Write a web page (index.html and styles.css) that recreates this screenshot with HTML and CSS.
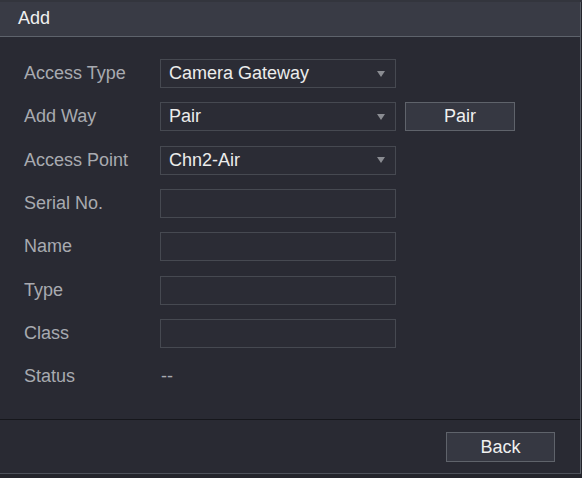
FILE: index.html
```html
<!DOCTYPE html>
<html>
<head>
<meta charset="utf-8">
<link rel="stylesheet" href="styles.css">
</head>
<body>
<div class="backdrop"></div>
<div class="dialog">
  <div class="header">Add</div>
  <div class="content">
    <div class="form">
      <div class="label">Access Type</div>
      <div class="row"><div class="select"><span>Camera Gateway</span><i class="arrow"></i></div></div>
      <div class="label">Add Way</div>
      <div class="row"><div class="select"><span>Pair</span><i class="arrow"></i></div><button class="btn pair">Pair</button></div>
      <div class="label">Access Point</div>
      <div class="row"><div class="select"><span>Chn2-Air</span><i class="arrow"></i></div></div>
      <div class="label">Serial No.</div>
      <div class="row"><div class="input"></div></div>
      <div class="label">Name</div>
      <div class="row"><div class="input"></div></div>
      <div class="label">Type</div>
      <div class="row"><div class="input"></div></div>
      <div class="label">Class</div>
      <div class="row"><div class="input"></div></div>
      <div class="label">Status</div>
      <div class="row"><span class="status">--</span></div>
    </div>
  </div>
  <div class="footer"><button class="btn back">Back</button></div>
</div>
</body>
</html>
```
FILE: styles.css
```css
html, body {
  margin: 0;
  padding: 0;
  background: #24252c;
  font-family: "Liberation Sans", Arial, sans-serif;
  font-size: 18px;
}
.backdrop {
  height: 2px;
  background: #33353d;
}
.dialog {
  width: 580px;
  border-right: 1px solid #5b6068;
  border-bottom: 1px solid #4e525b;
  background: #292a33;
}
.header {
  height: 34px;
  line-height: 32px;
  padding-left: 18px;
  background: #393b45;
  color: #f0f0f0;
  border-bottom: 1px solid #5e636c;
}
.content {
  height: 383px;
  border-bottom: 1px solid #16171c;
  box-sizing: border-box;
  padding: 22px 0 0 24px;
}
.form {
  display: grid;
  grid-template-columns: 136px 1fr;
  grid-auto-rows: 29px;
  row-gap: 14.33px;
}
.label {
  color: #a8aab0;
  display: flex;
  align-items: center;
}
.row {
  display: flex;
  align-items: center;
  gap: 9px;
}
.select, .input {
  width: 236px;
  height: 29px;
  box-sizing: border-box;
  border: 1px solid #464951;
  background: #2b2c35;
  color: #ececec;
  display: flex;
  align-items: center;
  padding: 0 8px;
  justify-content: space-between;
}
.arrow {
  width: 0;
  height: 0;
  border-left: 4px solid transparent;
  border-right: 4px solid transparent;
  border-top: 6px solid #8a8c92;
  margin-right: 2px;
}
.btn {
  font-family: "Liberation Sans", Arial, sans-serif;
  font-size: 18px;
  color: #f0f0f0;
  background: #363842;
  border: 1px solid #5f636b;
  padding: 0;
  box-sizing: border-box;
}
.pair {
  width: 110px;
  height: 29px;
}
.status {
  color: #a8aab0;
  padding-left: 1px;
}
.footer {
  height: 53px;
  box-sizing: border-box;
  padding: 12px 25px 0 0;
  display: flex;
  justify-content: flex-end;
  align-items: flex-start;
}
.back {
  width: 109px;
  height: 30px;
}
```
